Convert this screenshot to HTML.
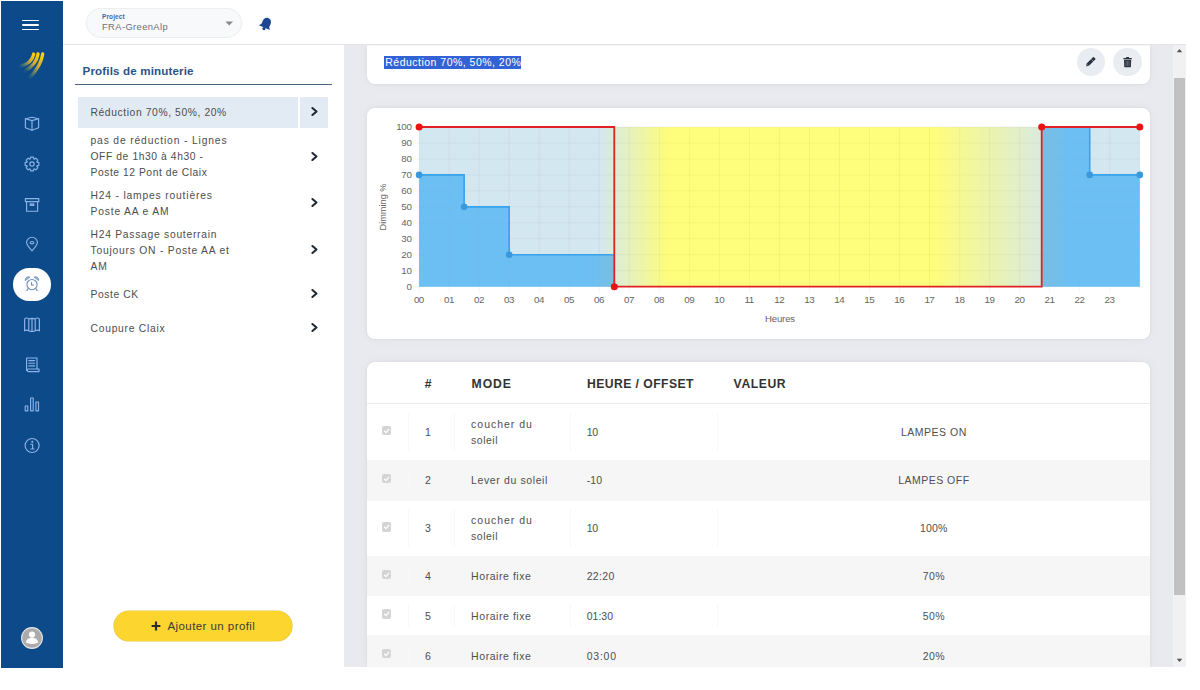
<!DOCTYPE html>
<html><head><meta charset="utf-8">
<style>
*{box-sizing:border-box;margin:0;padding:0}
html,body{width:1200px;height:690px;overflow:hidden;background:#fff;font-family:"Liberation Sans",sans-serif}
.a{position:absolute}
.tx{white-space:nowrap}
svg.a{overflow:visible}
</style></head><body>
<div class="a" style="left:1px;top:1px;width:61.60px;height:666.50px;background:#0d4a8a"></div>
<div class="a" style="left:62.6px;top:1px;width:1123.40px;height:44.00px;background:#fff"></div>
<div class="a" style="left:62.6px;top:44.2px;width:1123.40px;height:1.00px;background:#e3e3e6"></div>
<div class="a" style="left:62.6px;top:45.2px;width:281.40px;height:622.30px;background:#fff"></div>
<div class="a" style="left:344px;top:45.2px;width:829.00px;height:622.30px;background:#e9eaef;overflow:hidden"></div>
<div class="a" style="left:1173px;top:45.2px;width:12.80px;height:622.30px;background:#f1f1f1"></div>
<div class="a" style="left:1174px;top:77.8px;width:10.80px;height:517.40px;background:#c1c1c1"></div>
<svg class="a" style="left:1176px;top:48px;" width="7" height="5" viewBox="0 0 7 5"><path d="M0.8 4.2 L3.5 1 L6.2 4.2Z" fill="#505050"/></svg>
<svg class="a" style="left:1176px;top:658px;" width="7" height="5" viewBox="0 0 7 5"><path d="M0.8 0.8 L3.5 4 L6.2 0.8Z" fill="#505050"/></svg>
<div class="a" style="left:22.2px;top:19.6px;width:16.90px;height:1.80px;background:#fff;border-radius:1px"></div>
<div class="a" style="left:22.2px;top:24.1px;width:16.90px;height:1.80px;background:#fff;border-radius:1px"></div>
<div class="a" style="left:22.2px;top:28.6px;width:16.90px;height:1.80px;background:#fff;border-radius:1px"></div>
<svg class="a" style="left:18.3px;top:51.3px;" width="30" height="30" viewBox="0 0 30 30"><defs><linearGradient id="lg" x1="1" y1="0" x2="0" y2="1"><stop offset="0" stop-color="#f8d400"/><stop offset=".45" stop-color="#d0a838"/><stop offset=".75" stop-color="#90a050" stop-opacity=".6"/><stop offset="1" stop-color="#6a9a70" stop-opacity=".1"/></linearGradient></defs>
<g fill="none" stroke="url(#lg)" stroke-width="3.3" stroke-linecap="round">
<path d="M15.7 3 C14.8 8 11 13 2.4 15.4"/>
<path d="M20 3 C19 10 14 16 7 19.8"/>
<path d="M24.7 3 C23.5 12 18 20 11.7 26.5"/>
</g></svg>
<svg class="a" style="left:24px;top:116px;" width="16" height="16" viewBox="0 0 16 16"><g fill="none" stroke="#8db3e6" stroke-width="1.15" stroke-linejoin="round" stroke-linecap="round"><path d="M8 1.2 L14.6 2.8 L14.6 11.8 L8 14.2 L1.4 11.8 L1.4 2.8Z"/><path d="M1.4 2.8 L8 4.6 L14.6 2.8 M8 4.6 L8 14.2"/></g></svg>
<svg class="a" style="left:23.8px;top:155.6px;" width="16" height="16" viewBox="0 0 16 16"><g fill="none" stroke="#8db3e6" stroke-width="1.15" stroke-linejoin="round" stroke-linecap="round"><path d="M6.13 3.04 L6.61 1.14 L9.39 1.14 L9.87 3.04 L10.19 3.17 L11.87 2.17 L13.83 4.13 L12.83 5.81 L12.96 6.13 L14.86 6.61 L14.86 9.39 L12.96 9.87 L12.83 10.19 L13.83 11.87 L11.87 13.83 L10.19 12.83 L9.87 12.96 L9.39 14.86 L6.61 14.86 L6.13 12.96 L5.81 12.83 L4.13 13.83 L2.17 11.87 L3.17 10.19 L3.04 9.87 L1.14 9.39 L1.14 6.61 L3.04 6.13 L3.17 5.81 L2.17 4.13 L4.13 2.17 L5.81 3.17Z"/><circle cx="8" cy="8" r="2.2"/></g></svg>
<svg class="a" style="left:24px;top:196.8px;" width="16" height="16" viewBox="0 0 16 16"><g fill="none" stroke="#8db3e6" stroke-width="1.15" stroke-linejoin="round" stroke-linecap="round"><rect x="1.4" y="1.6" width="13.4" height="3"/><path d="M2.6 4.6 V14.2 H13.6 V4.6"/><rect x="6.2" y="6.8" width="3.6" height="1.6"/></g></svg>
<svg class="a" style="left:24px;top:236px;" width="16" height="16" viewBox="0 0 16 16"><g fill="none" stroke="#8db3e6" stroke-width="1.15" stroke-linejoin="round" stroke-linecap="round"><path d="M8 14.8 C5 11.6 2.6 8.8 2.6 6.6 A5.4 5.4 0 0 1 13.4 6.6 C13.4 8.8 11 11.6 8 14.8Z"/><ellipse cx="8" cy="6.7" rx="1.9" ry="1.2"/></g></svg>
<div class="a" style="left:12.6px;top:268.3px;width:38.30px;height:32.50px;background:#fff;border-radius:16px/16.25px"></div>
<svg class="a" style="left:23.6px;top:276px;" width="16" height="17" viewBox="0 0 16 17"><g fill="none" stroke="#6d8db8" stroke-width="1.1" stroke-linecap="round"><circle cx="8" cy="8.6" r="5.1"/><path d="M7.6 6.2 V9 H9.6"/><path d="M4.2 12.6 L2.8 14.6 M11.8 12.6 L13.2 14.6"/></g><g fill="#a9bfdc" stroke="#6d8db8" stroke-width=".9"><path d="M1.4 4.6 A3 3 0 0 1 5.8 1.2Z"/><path d="M14.6 4.6 A3 3 0 0 0 10.2 1.2Z"/></g></svg>
<svg class="a" style="left:23px;top:316px;" width="18" height="17" viewBox="0 0 18 17"><g fill="none" stroke="#8db3e6" stroke-width="1.15" stroke-linejoin="round" stroke-linecap="round"><path d="M1.6 3.6 Q1.6 2 3.4 2 Q5 2 5.8 3 Q6.6 2.4 9 2.4 Q11.4 2.4 12.2 3 Q13 2 14.6 2 Q16.4 2 16.4 3.6 V14.8 Q14.8 13.6 12.4 14.6 Q11.2 15.6 9 15.2 Q6.8 15.6 5.6 14.6 Q3.2 13.6 1.6 14.8Z M5.8 3 V14.6 M9 2.4 V15.2 M12.2 3 V14.6"/></g></svg>
<svg class="a" style="left:24px;top:356px;" width="16" height="17" viewBox="0 0 16 17"><g fill="none" stroke="#8db3e6" stroke-width="1.15" stroke-linejoin="round" stroke-linecap="round"><path d="M2.6 14.4 V2 H13 V13"/><path d="M4 13 H15 V15.6 H4.4 Q3.2 15.6 3.4 14.2 Q3.6 13 4 13"/><path d="M4.8 4.6 H10.6 M4.8 7.2 H10.6 M4.8 9.9 H10.6"/></g></svg>
<svg class="a" style="left:24px;top:396px;" width="16" height="16" viewBox="0 0 16 16"><g fill="none" stroke="#8db3e6" stroke-width="1.15" stroke-linejoin="round" stroke-linecap="round"><rect x="1.2" y="10" width="2.6" height="4.8"/><rect x="6.6" y="2" width="2.6" height="12.8"/><rect x="11.9" y="6" width="2.6" height="8.8"/></g></svg>
<svg class="a" style="left:24px;top:437px;" width="16" height="16" viewBox="0 0 16 16"><g fill="none" stroke="#8db3e6" stroke-width="1.15" stroke-linejoin="round" stroke-linecap="round"><circle cx="8.1" cy="8.5" r="7"/><path d="M6.8 7.2 H8.6 V12 M6.8 12 H10"/><circle cx="8.3" cy="4.8" r=".5" fill="#8db3e6"/></g></svg>
<svg class="a" style="left:21px;top:626.5px;" width="22" height="22" viewBox="0 0 22 22"><circle cx="11" cy="11" r="10.4" fill="#ababab" stroke="#e6e6e6" stroke-width="1.1"/><circle cx="11" cy="7.6" r="3.1" fill="#fff"/><path d="M4.8 15.6 C5.2 12.2 7.4 11 11 11 C14.6 11 16.8 12.2 17.2 15.6 C15.4 16.6 13.4 17 11 17 C8.6 17 6.6 16.6 4.8 15.6Z" fill="#fff"/></svg>
<div class="a" style="left:86.6px;top:9px;width:154.40px;height:28.00px;background:#f7f9fb;border-radius:14px;box-shadow:0 0 0 1px #eceef1"></div>
<div id="t0" class="a tx " style="left:102px;top:14.00px;font-size:6.4px;line-height:6.4px;color:#3c6aa5;font-weight:700;letter-spacing:0.171px;">Project</div>
<div id="t1" class="a tx " style="left:102px;top:22.00px;font-size:9.4px;line-height:9.4px;color:#707070;font-weight:400;letter-spacing:0.383px;">FRA-GreenAlp</div>
<svg class="a" style="left:224.5px;top:20.5px;" width="8.5" height="5" viewBox="0 0 8.5 5"><path d="M0.4 0.4 H8.1 L4.25 4.4Z" fill="#8a8a8a"/></svg>
<svg class="a" style="left:258px;top:16px;" width="16" height="16" viewBox="0 0 16 16"><g transform="rotate(24 8 8)"><path d="M8 1.6 C10.6 1.6 12.2 3.6 12.2 6.4 V9.6 L14 12 H2 L3.8 9.6 V6.4 C3.8 3.6 5.4 1.6 8 1.6Z" fill="#1a4790"/><circle cx="8" cy="13" r="1.6" fill="#1a4790"/></g></svg>
<div id="t2" class="a tx " style="left:82.6px;top:65.00px;font-size:11.6px;line-height:11.6px;color:#2b5389;font-weight:700;letter-spacing:0.140px;">Profils de minuterie</div>
<div class="a" style="left:74.5px;top:83.7px;width:257.30px;height:1.00px;background:#4a6486"></div>
<div class="a" style="left:78.2px;top:96.7px;width:219.90px;height:31.20px;background:#e2eaf4"></div>
<div class="a" style="left:299.9px;top:96.7px;width:27.90px;height:31.20px;background:#e2eaf4"></div>
<div id="t3" class="a tx lst" style="left:90.5px;top:108.00px;font-size:10.3px;line-height:10.3px;color:#4d4d4d;font-weight:400;letter-spacing:0.600px;">Réduction 70%, 50%, 20%</div>
<div id="t4" class="a tx lst" style="left:90.5px;top:136.00px;font-size:10.3px;line-height:10.3px;color:#4d4d4d;font-weight:400;letter-spacing:0.852px;">pas de réduction - Lignes</div>
<div id="t5" class="a tx lst" style="left:90.5px;top:152.00px;font-size:10.3px;line-height:10.3px;color:#4d4d4d;font-weight:400;letter-spacing:0.588px;">OFF de 1h30 à 4h30 -</div>
<div id="t6" class="a tx lst" style="left:90.5px;top:168.00px;font-size:10.3px;line-height:10.3px;color:#4d4d4d;font-weight:400;letter-spacing:0.550px;">Poste 12 Pont de Claix</div>
<div id="t7" class="a tx lst" style="left:90.5px;top:191.00px;font-size:10.3px;line-height:10.3px;color:#4d4d4d;font-weight:400;letter-spacing:0.821px;">H24 - lampes routières</div>
<div id="t8" class="a tx lst" style="left:90.5px;top:207.00px;font-size:10.3px;line-height:10.3px;color:#4d4d4d;font-weight:400;letter-spacing:0.823px;">Poste AA e AM</div>
<div id="t9" class="a tx lst" style="left:90.5px;top:230.00px;font-size:10.3px;line-height:10.3px;color:#4d4d4d;font-weight:400;letter-spacing:0.739px;">H24 Passage souterrain</div>
<div id="t10" class="a tx lst" style="left:90.5px;top:246.00px;font-size:10.3px;line-height:10.3px;color:#4d4d4d;font-weight:400;letter-spacing:0.778px;">Toujours ON - Poste AA et</div>
<div id="t11" class="a tx lst" style="left:90.5px;top:262.00px;font-size:10.3px;line-height:10.3px;color:#4d4d4d;font-weight:400;letter-spacing:1.000px;">AM</div>
<div id="t12" class="a tx lst" style="left:90.5px;top:290.00px;font-size:10.3px;line-height:10.3px;color:#4d4d4d;font-weight:400;letter-spacing:0.600px;">Poste CK</div>
<div id="t13" class="a tx lst" style="left:90.5px;top:324.00px;font-size:10.3px;line-height:10.3px;color:#4d4d4d;font-weight:400;letter-spacing:0.746px;">Coupure Claix</div>
<svg class="a" style="left:309.5px;top:105.7px;" width="9" height="11" viewBox="0 0 9 11"><path d="M2.4 2 L6.5 5.5 L2.4 9" fill="none" stroke="#1f2933" stroke-width="2.1" stroke-linecap="round" stroke-linejoin="round"/></svg>
<svg class="a" style="left:309.5px;top:150.5px;" width="9" height="11" viewBox="0 0 9 11"><path d="M2.4 2 L6.5 5.5 L2.4 9" fill="none" stroke="#1f2933" stroke-width="2.1" stroke-linecap="round" stroke-linejoin="round"/></svg>
<svg class="a" style="left:309.5px;top:197.0px;" width="9" height="11" viewBox="0 0 9 11"><path d="M2.4 2 L6.5 5.5 L2.4 9" fill="none" stroke="#1f2933" stroke-width="2.1" stroke-linecap="round" stroke-linejoin="round"/></svg>
<svg class="a" style="left:309.5px;top:243.5px;" width="9" height="11" viewBox="0 0 9 11"><path d="M2.4 2 L6.5 5.5 L2.4 9" fill="none" stroke="#1f2933" stroke-width="2.1" stroke-linecap="round" stroke-linejoin="round"/></svg>
<svg class="a" style="left:309.5px;top:288.0px;" width="9" height="11" viewBox="0 0 9 11"><path d="M2.4 2 L6.5 5.5 L2.4 9" fill="none" stroke="#1f2933" stroke-width="2.1" stroke-linecap="round" stroke-linejoin="round"/></svg>
<svg class="a" style="left:309.5px;top:321.7px;" width="9" height="11" viewBox="0 0 9 11"><path d="M2.4 2 L6.5 5.5 L2.4 9" fill="none" stroke="#1f2933" stroke-width="2.1" stroke-linecap="round" stroke-linejoin="round"/></svg>
<div class="a" style="left:114.4px;top:610.5px;width:177.60px;height:30.10px;background:#fdd52f;border-radius:15px;box-shadow:0 0 0 .6px #e2c548"></div>
<svg class="a" style="left:150.5px;top:620.8px;" width="10" height="10" viewBox="0 0 10 10"><path d="M5 .6 V9.4 M.6 5 H9.4" stroke="#2c2c2c" stroke-width="2.2"/></svg>
<div id="t14" class="a tx " style="left:167.4px;top:621.00px;font-size:11.5px;line-height:11.5px;color:#3a3a3a;font-weight:400;letter-spacing:0.435px;">Ajouter un profil</div>
<div class="a" style="left:0;top:0;width:1200px;height:690px;clip-path:polygon(344px 45.2px,1173px 45.2px,1173px 667.5px,344px 667.5px)">
<div class="a" style="left:367px;top:45.2px;width:783.00px;height:39.10px;background:#fff;box-shadow:0 0 3px rgba(40,40,60,.06),0 0 12px rgba(40,40,60,.04);border-radius:0 0 8px 8px"></div>
<div class="a" style="left:367px;top:107.6px;width:783.00px;height:231.00px;background:#fff;box-shadow:0 0 3px rgba(40,40,60,.06),0 0 12px rgba(40,40,60,.04);border-radius:8px"></div>
<div class="a" style="left:367px;top:362.2px;width:783.00px;height:305.30px;background:#fff;box-shadow:0 0 3px rgba(40,40,60,.06),0 0 12px rgba(40,40,60,.04);border-radius:8px 8px 0 0"></div>
<div class="a" style="left:384.1px;top:55.9px;width:137.20px;height:12.70px;background:#3163d6"></div>
<div id="t15" class="a tx " style="left:385.3px;top:57.00px;font-size:10.5px;line-height:10.5px;color:#fff;font-weight:400;letter-spacing:0.481px;">Réduction 70%, 50%, 20%</div>
<div class="a" style="left:1076.7px;top:47.9px;width:28.50px;height:28.50px;background:#e9edf1;border-radius:50%"></div>
<div class="a" style="left:1113.3px;top:47.9px;width:28.50px;height:28.50px;background:#e9edf1;border-radius:50%"></div>
<svg class="a" style="left:1084px;top:56px;" width="12" height="12" viewBox="0 0 12 12"><path d="M3.8 8.6 L10.6 1.8" stroke="#2b3440" stroke-width="3.3"/><path d="M1.9 10.5 L2.6 7.4 L5.0 9.8Z" fill="#2b3440"/><path d="M7.6 3.6 L9.6 5.6" stroke="#e9edf1" stroke-width=".5"/><circle cx="2.6" cy="9.8" r=".5" fill="#dfe4ea"/></svg>
<svg class="a" style="left:1122px;top:56px;" width="12" height="12" viewBox="0 0 12 12"><path d="M1.4 1.9 H9.8 V3.3 H1.4Z M4.2 2 V1 H7 V2" fill="#2b3440"/><path d="M2 3.7 H9.2 L8.9 11.2 H2.3Z" fill="#2b3440"/><path d="M4.1 4.8 V10 M5.6 4.8 V10 M7.1 4.8 V10" stroke="#8a939c" stroke-width=".55"/></svg>
<svg class="a" style="left:0;top:0" width="1200" height="690"><defs><linearGradient id="bgg" x1="419.1" x2="1139.8" y1="0" y2="0" gradientUnits="userSpaceOnUse"><stop offset="0" stop-color="#d3e7f1"/><stop offset="0.2500" stop-color="#d3e7f1"/><stop offset="0.3458" stop-color="#fefd7c"/><stop offset="0.7167" stop-color="#fefd7c"/><stop offset="0.8917" stop-color="#d3e7f1"/><stop offset="1" stop-color="#d3e7f1"/></linearGradient></defs><rect x="419.1" y="127.0" width="720.6999999999999" height="159.7" fill="url(#bgg)"/><path d="M419.10 127.0 V293.7 M449.13 127.0 V293.7 M479.16 127.0 V293.7 M509.19 127.0 V293.7 M539.22 127.0 V293.7 M569.25 127.0 V293.7 M599.27 127.0 V293.7 M629.30 127.0 V293.7 M659.33 127.0 V293.7 M689.36 127.0 V293.7 M719.39 127.0 V293.7 M749.42 127.0 V293.7 M779.45 127.0 V293.7 M809.48 127.0 V293.7 M839.51 127.0 V293.7 M869.54 127.0 V293.7 M899.57 127.0 V293.7 M929.60 127.0 V293.7 M959.62 127.0 V293.7 M989.65 127.0 V293.7 M1019.68 127.0 V293.7 M1049.71 127.0 V293.7 M1079.74 127.0 V293.7 M1109.77 127.0 V293.7 M1139.80 127.0 V286.7 M413.1 286.70 H1139.8 M413.1 270.73 H1139.8 M413.1 254.76 H1139.8 M413.1 238.79 H1139.8 M413.1 222.82 H1139.8 M413.1 206.85 H1139.8 M413.1 190.88 H1139.8 M413.1 174.91 H1139.8 M413.1 158.94 H1139.8 M413.1 142.97 H1139.8 M413.1 127.00 H1139.8" stroke="#000" stroke-opacity=".04" stroke-width="1"/><path d="M419.10 286.7 L419.10 174.91 L464.14 174.91 L464.14 206.85 L509.19 206.85 L509.19 254.76 L614.29 254.76 L614.29 286.7 Z M1041.69 286.7 L1041.69 127.00 L1089.74 127.00 L1089.74 174.91 L1139.80 174.91 L1139.80 286.7 Z" fill="#55b6f3" fill-opacity=".82"/><defs><linearGradient id="ovg" x1="419.1" x2="1139.8" y1="0" y2="0" gradientUnits="userSpaceOnUse"><stop offset="0" stop-color="#b4b48c" stop-opacity="0"/><stop offset="0.2375" stop-color="#b4b48c" stop-opacity="0"/><stop offset="0.2708" stop-color="#b4b48c" stop-opacity=".16"/><stop offset="0.2712" stop-color="#b4b48c" stop-opacity="0"/><stop offset="0.8633" stop-color="#b4b48c" stop-opacity="0"/><stop offset="0.8638" stop-color="#b4b48c" stop-opacity=".16"/><stop offset="0.9042" stop-color="#b4b48c" stop-opacity="0"/><stop offset="1" stop-color="#b4b48c" stop-opacity="0"/></linearGradient></defs><path d="M419.10 286.7 L419.10 174.91 L464.14 174.91 L464.14 206.85 L509.19 206.85 L509.19 254.76 L614.29 254.76 L614.29 286.7 Z M1041.69 286.7 L1041.69 127.00 L1089.74 127.00 L1089.74 174.91 L1139.80 174.91 L1139.80 286.7 Z" fill="url(#ovg)"/><path d="M419.10 174.91 H464.14 V206.85 H509.19 V254.76 H614.29 M1041.69 127.00 H1089.74 V174.91 H1139.80" fill="none" stroke="#3aa2ea" stroke-width="1.6"/><path d="M419.10 127.00 H614.29 V286.7 H1041.69 V127.00 H1139.80" fill="none" stroke="#e22222" stroke-width="1.8"/><circle cx="419.10" cy="174.91" r="3.3" fill="#3a98dd"/><circle cx="464.14" cy="206.85" r="3.3" fill="#3a98dd"/><circle cx="509.19" cy="254.76" r="3.3" fill="#3a98dd"/><circle cx="1089.74" cy="174.91" r="3.3" fill="#3a98dd"/><circle cx="1139.80" cy="174.91" r="3.3" fill="#3a98dd"/><circle cx="419.10" cy="127.00" r="3.5" fill="#ee1111"/><circle cx="614.29" cy="286.70" r="3.5" fill="#ee1111"/><circle cx="1041.69" cy="127.00" r="3.5" fill="#ee1111"/><circle cx="1139.80" cy="127.00" r="3.5" fill="#ee1111"/></svg>
<div class="a tx cl" style="right:788.5px;top:281.50px;font-size:9.8px;line-height:10px;color:#666;text-align:right;letter-spacing:-.35px">0</div>
<div class="a tx cl" style="right:788.5px;top:265.53px;font-size:9.8px;line-height:10px;color:#666;text-align:right;letter-spacing:-.35px">10</div>
<div class="a tx cl" style="right:788.5px;top:249.56px;font-size:9.8px;line-height:10px;color:#666;text-align:right;letter-spacing:-.35px">20</div>
<div class="a tx cl" style="right:788.5px;top:233.59px;font-size:9.8px;line-height:10px;color:#666;text-align:right;letter-spacing:-.35px">30</div>
<div class="a tx cl" style="right:788.5px;top:217.62px;font-size:9.8px;line-height:10px;color:#666;text-align:right;letter-spacing:-.35px">40</div>
<div class="a tx cl" style="right:788.5px;top:201.65px;font-size:9.8px;line-height:10px;color:#666;text-align:right;letter-spacing:-.35px">50</div>
<div class="a tx cl" style="right:788.5px;top:185.68px;font-size:9.8px;line-height:10px;color:#666;text-align:right;letter-spacing:-.35px">60</div>
<div class="a tx cl" style="right:788.5px;top:169.71px;font-size:9.8px;line-height:10px;color:#666;text-align:right;letter-spacing:-.35px">70</div>
<div class="a tx cl" style="right:788.5px;top:153.74px;font-size:9.8px;line-height:10px;color:#666;text-align:right;letter-spacing:-.35px">80</div>
<div class="a tx cl" style="right:788.5px;top:137.77px;font-size:9.8px;line-height:10px;color:#666;text-align:right;letter-spacing:-.35px">90</div>
<div class="a tx cl" style="right:788.5px;top:121.80px;font-size:9.8px;line-height:10px;color:#666;text-align:right;letter-spacing:-.35px">100</div>
<div class="a tx cl" style="left:404.10px;width:30px;top:295.4px;font-size:9.8px;line-height:10px;color:#666;text-align:center;letter-spacing:-.45px;text-indent:-.45px">00</div>
<div class="a tx cl" style="left:434.13px;width:30px;top:295.4px;font-size:9.8px;line-height:10px;color:#666;text-align:center;letter-spacing:-.45px;text-indent:-.45px">01</div>
<div class="a tx cl" style="left:464.16px;width:30px;top:295.4px;font-size:9.8px;line-height:10px;color:#666;text-align:center;letter-spacing:-.45px;text-indent:-.45px">02</div>
<div class="a tx cl" style="left:494.19px;width:30px;top:295.4px;font-size:9.8px;line-height:10px;color:#666;text-align:center;letter-spacing:-.45px;text-indent:-.45px">03</div>
<div class="a tx cl" style="left:524.22px;width:30px;top:295.4px;font-size:9.8px;line-height:10px;color:#666;text-align:center;letter-spacing:-.45px;text-indent:-.45px">04</div>
<div class="a tx cl" style="left:554.25px;width:30px;top:295.4px;font-size:9.8px;line-height:10px;color:#666;text-align:center;letter-spacing:-.45px;text-indent:-.45px">05</div>
<div class="a tx cl" style="left:584.27px;width:30px;top:295.4px;font-size:9.8px;line-height:10px;color:#666;text-align:center;letter-spacing:-.45px;text-indent:-.45px">06</div>
<div class="a tx cl" style="left:614.30px;width:30px;top:295.4px;font-size:9.8px;line-height:10px;color:#666;text-align:center;letter-spacing:-.45px;text-indent:-.45px">07</div>
<div class="a tx cl" style="left:644.33px;width:30px;top:295.4px;font-size:9.8px;line-height:10px;color:#666;text-align:center;letter-spacing:-.45px;text-indent:-.45px">08</div>
<div class="a tx cl" style="left:674.36px;width:30px;top:295.4px;font-size:9.8px;line-height:10px;color:#666;text-align:center;letter-spacing:-.45px;text-indent:-.45px">09</div>
<div class="a tx cl" style="left:704.39px;width:30px;top:295.4px;font-size:9.8px;line-height:10px;color:#666;text-align:center;letter-spacing:-.45px;text-indent:-.45px">10</div>
<div class="a tx cl" style="left:734.42px;width:30px;top:295.4px;font-size:9.8px;line-height:10px;color:#666;text-align:center;letter-spacing:-.45px;text-indent:-.45px">11</div>
<div class="a tx cl" style="left:764.45px;width:30px;top:295.4px;font-size:9.8px;line-height:10px;color:#666;text-align:center;letter-spacing:-.45px;text-indent:-.45px">12</div>
<div class="a tx cl" style="left:794.48px;width:30px;top:295.4px;font-size:9.8px;line-height:10px;color:#666;text-align:center;letter-spacing:-.45px;text-indent:-.45px">13</div>
<div class="a tx cl" style="left:824.51px;width:30px;top:295.4px;font-size:9.8px;line-height:10px;color:#666;text-align:center;letter-spacing:-.45px;text-indent:-.45px">14</div>
<div class="a tx cl" style="left:854.54px;width:30px;top:295.4px;font-size:9.8px;line-height:10px;color:#666;text-align:center;letter-spacing:-.45px;text-indent:-.45px">15</div>
<div class="a tx cl" style="left:884.57px;width:30px;top:295.4px;font-size:9.8px;line-height:10px;color:#666;text-align:center;letter-spacing:-.45px;text-indent:-.45px">16</div>
<div class="a tx cl" style="left:914.60px;width:30px;top:295.4px;font-size:9.8px;line-height:10px;color:#666;text-align:center;letter-spacing:-.45px;text-indent:-.45px">17</div>
<div class="a tx cl" style="left:944.62px;width:30px;top:295.4px;font-size:9.8px;line-height:10px;color:#666;text-align:center;letter-spacing:-.45px;text-indent:-.45px">18</div>
<div class="a tx cl" style="left:974.65px;width:30px;top:295.4px;font-size:9.8px;line-height:10px;color:#666;text-align:center;letter-spacing:-.45px;text-indent:-.45px">19</div>
<div class="a tx cl" style="left:1004.68px;width:30px;top:295.4px;font-size:9.8px;line-height:10px;color:#666;text-align:center;letter-spacing:-.45px;text-indent:-.45px">20</div>
<div class="a tx cl" style="left:1034.71px;width:30px;top:295.4px;font-size:9.8px;line-height:10px;color:#666;text-align:center;letter-spacing:-.45px;text-indent:-.45px">21</div>
<div class="a tx cl" style="left:1064.74px;width:30px;top:295.4px;font-size:9.8px;line-height:10px;color:#666;text-align:center;letter-spacing:-.45px;text-indent:-.45px">22</div>
<div class="a tx cl" style="left:1094.77px;width:30px;top:295.4px;font-size:9.8px;line-height:10px;color:#666;text-align:center;letter-spacing:-.45px;text-indent:-.45px">23</div>
<div class="a tx cl" style="left:730px;width:100px;top:313.6px;font-size:9.6px;line-height:10px;color:#666;text-align:center;letter-spacing:-.18px">Heures</div>
<div class="a tx cl" style="left:332.6px;width:100px;top:202.4px;font-size:9.2px;line-height:10px;color:#666;text-align:center;transform:rotate(-90deg)">Dimming %</div>
<div class="a" style="left:367px;top:403.0px;width:783.00px;height:1.40px;background:#ebebeb"></div>
<div class="a" style="left:408.2px;top:412.9px;width:1.00px;height:38.30px;background:#f8f8f8"></div>
<div class="a" style="left:454.4px;top:412.9px;width:1.00px;height:38.30px;background:#f8f8f8"></div>
<div class="a" style="left:570.3px;top:412.9px;width:1.00px;height:38.30px;background:#f8f8f8"></div>
<div class="a" style="left:717.0px;top:412.9px;width:1.00px;height:38.30px;background:#f8f8f8"></div>
<div class="a" style="left:382.2px;top:426.0px;width:9.30px;height:9.30px;background:#d4d4d4;border-radius:2px"></div>
<svg class="a" style="left:382.2px;top:426.0px;" width="9.3" height="9.3" viewBox="0 0 9.3 9.3"><path d="M2.2 4.8 L4 6.6 L7.2 2.8" fill="none" stroke="#fff" stroke-width="1.3"/></svg>
<div class="a" style="left:367px;top:459.7px;width:783.00px;height:41.10px;background:#f6f6f6"></div>
<div class="a" style="left:408.2px;top:468.2px;width:1.00px;height:24.10px;background:#f8f8f8"></div>
<div class="a" style="left:454.4px;top:468.2px;width:1.00px;height:24.10px;background:#f8f8f8"></div>
<div class="a" style="left:570.3px;top:468.2px;width:1.00px;height:24.10px;background:#f8f8f8"></div>
<div class="a" style="left:717.0px;top:468.2px;width:1.00px;height:24.10px;background:#f8f8f8"></div>
<div class="a" style="left:382.2px;top:474.20000000000005px;width:9.30px;height:9.30px;background:#d4d4d4;border-radius:2px"></div>
<svg class="a" style="left:382.2px;top:474.20000000000005px;" width="9.3" height="9.3" viewBox="0 0 9.3 9.3"><path d="M2.2 4.8 L4 6.6 L7.2 2.8" fill="none" stroke="#fff" stroke-width="1.3"/></svg>
<div class="a" style="left:408.2px;top:509.3px;width:1.00px;height:38.00px;background:#f8f8f8"></div>
<div class="a" style="left:454.4px;top:509.3px;width:1.00px;height:38.00px;background:#f8f8f8"></div>
<div class="a" style="left:570.3px;top:509.3px;width:1.00px;height:38.00px;background:#f8f8f8"></div>
<div class="a" style="left:717.0px;top:509.3px;width:1.00px;height:38.00px;background:#f8f8f8"></div>
<div class="a" style="left:382.2px;top:522.25px;width:9.30px;height:9.30px;background:#d4d4d4;border-radius:2px"></div>
<svg class="a" style="left:382.2px;top:522.25px;" width="9.3" height="9.3" viewBox="0 0 9.3 9.3"><path d="M2.2 4.8 L4 6.6 L7.2 2.8" fill="none" stroke="#fff" stroke-width="1.3"/></svg>
<div class="a" style="left:367px;top:555.8px;width:783.00px;height:39.80px;background:#f6f6f6"></div>
<div class="a" style="left:408.2px;top:564.3px;width:1.00px;height:22.80px;background:#f8f8f8"></div>
<div class="a" style="left:454.4px;top:564.3px;width:1.00px;height:22.80px;background:#f8f8f8"></div>
<div class="a" style="left:570.3px;top:564.3px;width:1.00px;height:22.80px;background:#f8f8f8"></div>
<div class="a" style="left:717.0px;top:564.3px;width:1.00px;height:22.80px;background:#f8f8f8"></div>
<div class="a" style="left:382.2px;top:569.6500000000001px;width:9.30px;height:9.30px;background:#d4d4d4;border-radius:2px"></div>
<svg class="a" style="left:382.2px;top:569.6500000000001px;" width="9.3" height="9.3" viewBox="0 0 9.3 9.3"><path d="M2.2 4.8 L4 6.6 L7.2 2.8" fill="none" stroke="#fff" stroke-width="1.3"/></svg>
<div class="a" style="left:408.2px;top:604.1px;width:1.00px;height:22.50px;background:#f8f8f8"></div>
<div class="a" style="left:454.4px;top:604.1px;width:1.00px;height:22.50px;background:#f8f8f8"></div>
<div class="a" style="left:570.3px;top:604.1px;width:1.00px;height:22.50px;background:#f8f8f8"></div>
<div class="a" style="left:717.0px;top:604.1px;width:1.00px;height:22.50px;background:#f8f8f8"></div>
<div class="a" style="left:382.2px;top:609.3000000000001px;width:9.30px;height:9.30px;background:#d4d4d4;border-radius:2px"></div>
<svg class="a" style="left:382.2px;top:609.3000000000001px;" width="9.3" height="9.3" viewBox="0 0 9.3 9.3"><path d="M2.2 4.8 L4 6.6 L7.2 2.8" fill="none" stroke="#fff" stroke-width="1.3"/></svg>
<div class="a" style="left:367px;top:635.1px;width:783.00px;height:32.40px;background:#f6f6f6"></div>
<div class="a" style="left:408.2px;top:643.6px;width:1.00px;height:23.10px;background:#f8f8f8"></div>
<div class="a" style="left:454.4px;top:643.6px;width:1.00px;height:23.10px;background:#f8f8f8"></div>
<div class="a" style="left:570.3px;top:643.6px;width:1.00px;height:23.10px;background:#f8f8f8"></div>
<div class="a" style="left:717.0px;top:643.6px;width:1.00px;height:23.10px;background:#f8f8f8"></div>
<div class="a" style="left:382.2px;top:649.1000000000001px;width:9.30px;height:9.30px;background:#d4d4d4;border-radius:2px"></div>
<svg class="a" style="left:382.2px;top:649.1000000000001px;" width="9.3" height="9.3" viewBox="0 0 9.3 9.3"><path d="M2.2 4.8 L4 6.6 L7.2 2.8" fill="none" stroke="#fff" stroke-width="1.3"/></svg>
<div id="t16" class="a tx " style="left:424.7px;top:378.00px;font-size:12.2px;line-height:12.2px;color:#333;font-weight:700;letter-spacing:1.000px;">#</div>
<div id="t17" class="a tx " style="left:471.5px;top:378.00px;font-size:12.2px;line-height:12.2px;color:#333;font-weight:700;letter-spacing:0.979px;">MODE</div>
<div id="t18" class="a tx " style="left:586.9px;top:378.00px;font-size:12.2px;line-height:12.2px;color:#333;font-weight:700;letter-spacing:0.438px;">HEURE / OFFSET</div>
<div id="t19" class="a tx " style="left:733.6px;top:378.00px;font-size:12.2px;line-height:12.2px;color:#333;font-weight:700;letter-spacing:0.559px;">VALEUR</div>
<div id="t20" class="a tx " style="left:424.9px;top:427.00px;font-size:10.6px;line-height:10.6px;color:#4f4f4f;font-weight:400;letter-spacing:0.000px;">1</div>
<div id="t21" class="a tx " style="left:471.1px;top:419.00px;font-size:10.5px;line-height:10.5px;color:#4f4f4f;font-weight:400;letter-spacing:0.977px;">coucher du</div>
<div id="t22" class="a tx " style="left:471.1px;top:435.00px;font-size:10.5px;line-height:10.5px;color:#4f4f4f;font-weight:400;letter-spacing:0.492px;">soleil</div>
<div id="t23" class="a tx " style="left:586.7px;top:427.00px;font-size:10.5px;line-height:10.5px;color:#4f4f4f;font-weight:400;letter-spacing:-0.200px;">10</div>
<div id="t24" class="a tx " style="left:900.9px;top:427.00px;font-size:10.5px;line-height:10.5px;color:#4f4f4f;font-weight:400;letter-spacing:0.527px;">LAMPES ON</div>
<div id="t25" class="a tx " style="left:424.9px;top:475.00px;font-size:10.6px;line-height:10.6px;color:#4f4f4f;font-weight:400;letter-spacing:0.000px;">2</div>
<div id="t26" class="a tx " style="left:471.1px;top:475.00px;font-size:10.5px;line-height:10.5px;color:#4f4f4f;font-weight:400;letter-spacing:0.613px;">Lever du soleil</div>
<div id="t27" class="a tx " style="left:586.7px;top:475.00px;font-size:10.5px;line-height:10.5px;color:#4f4f4f;font-weight:400;letter-spacing:0.056px;">-10</div>
<div id="t28" class="a tx " style="left:898.1999999999999px;top:475.00px;font-size:10.5px;line-height:10.5px;color:#4f4f4f;font-weight:400;letter-spacing:0.487px;">LAMPES OFF</div>
<div id="t29" class="a tx " style="left:424.9px;top:523.00px;font-size:10.6px;line-height:10.6px;color:#4f4f4f;font-weight:400;letter-spacing:0.000px;">3</div>
<div id="t30" class="a tx " style="left:471.1px;top:515.00px;font-size:10.5px;line-height:10.5px;color:#4f4f4f;font-weight:400;letter-spacing:0.977px;">coucher du</div>
<div id="t31" class="a tx " style="left:471.1px;top:531.00px;font-size:10.5px;line-height:10.5px;color:#4f4f4f;font-weight:400;letter-spacing:0.492px;">soleil</div>
<div id="t32" class="a tx " style="left:586.7px;top:523.00px;font-size:10.5px;line-height:10.5px;color:#4f4f4f;font-weight:400;letter-spacing:-0.200px;">10</div>
<div id="t33" class="a tx " style="left:920.0px;top:523.00px;font-size:10.5px;line-height:10.5px;color:#4f4f4f;font-weight:400;letter-spacing:0.147px;">100%</div>
<div id="t34" class="a tx " style="left:424.9px;top:571.00px;font-size:10.6px;line-height:10.6px;color:#4f4f4f;font-weight:400;letter-spacing:0.000px;">4</div>
<div id="t35" class="a tx " style="left:471.1px;top:571.00px;font-size:10.5px;line-height:10.5px;color:#4f4f4f;font-weight:400;letter-spacing:0.556px;">Horaire fixe</div>
<div id="t36" class="a tx " style="left:586.7px;top:571.00px;font-size:10.5px;line-height:10.5px;color:#4f4f4f;font-weight:400;letter-spacing:0.330px;">22:20</div>
<div id="t37" class="a tx " style="left:922.65px;top:571.00px;font-size:10.5px;line-height:10.5px;color:#4f4f4f;font-weight:400;letter-spacing:0.492px;">70%</div>
<div id="t38" class="a tx " style="left:424.9px;top:611.00px;font-size:10.6px;line-height:10.6px;color:#4f4f4f;font-weight:400;letter-spacing:0.000px;">5</div>
<div id="t39" class="a tx " style="left:471.1px;top:611.00px;font-size:10.5px;line-height:10.5px;color:#4f4f4f;font-weight:400;letter-spacing:0.556px;">Horaire fixe</div>
<div id="t40" class="a tx " style="left:586.7px;top:611.00px;font-size:10.5px;line-height:10.5px;color:#4f4f4f;font-weight:400;letter-spacing:0.005px;">01:30</div>
<div id="t41" class="a tx " style="left:922.65px;top:611.00px;font-size:10.5px;line-height:10.5px;color:#4f4f4f;font-weight:400;letter-spacing:0.492px;">50%</div>
<div id="t42" class="a tx " style="left:424.9px;top:651.00px;font-size:10.6px;line-height:10.6px;color:#4f4f4f;font-weight:400;letter-spacing:0.000px;">6</div>
<div id="t43" class="a tx " style="left:471.1px;top:651.00px;font-size:10.5px;line-height:10.5px;color:#4f4f4f;font-weight:400;letter-spacing:0.556px;">Horaire fixe</div>
<div id="t44" class="a tx " style="left:586.7px;top:651.00px;font-size:10.5px;line-height:10.5px;color:#4f4f4f;font-weight:400;letter-spacing:0.755px;">03:00</div>
<div id="t45" class="a tx " style="left:922.65px;top:651.00px;font-size:10.5px;line-height:10.5px;color:#4f4f4f;font-weight:400;letter-spacing:0.492px;">20%</div>
</div>
<div class="a" style="left:0px;top:667.5px;width:1200.00px;height:22.50px;background:#fff"></div>
<div class="a" style="left:1185.8px;top:0px;width:14.20px;height:690.00px;background:#fff"></div>
</body></html>
